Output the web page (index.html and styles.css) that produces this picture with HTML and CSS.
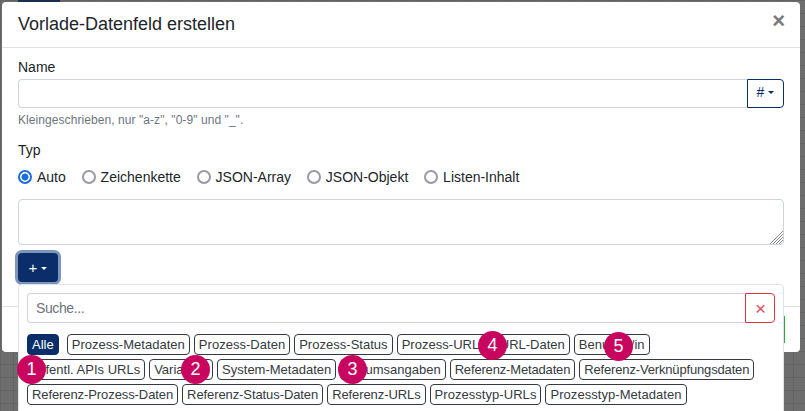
FILE: index.html
```html
<!DOCTYPE html>
<html lang="de">
<head>
<meta charset="utf-8">
<title>Vorlade-Datenfeld erstellen</title>
<link rel="stylesheet" href="styles.css">
</head>
<body>
<div class="backdrop">
  <span class="peek"></span>
  <div class="modal">
    <header class="modal-header">
      <h1 class="modal-title">Vorlade-Datenfeld erstellen</h1>
      <span class="close">×</span>
    </header>
    <div class="modal-body">
      <div class="label">Name</div>
      <div class="input-row">
        <div class="input"></div>
        <div class="hash-btn">#<i class="caret"></i></div>
      </div>
      <div class="help">Kleingeschrieben, nur "a-z", "0-9" und "_".</div>
      <div class="label typ">Typ</div>
      <div class="radios">
        <span class="radio checked"><i class="dot"></i>Auto</span>
        <span class="radio"><i class="dot"></i>Zeichenkette</span>
        <span class="radio"><i class="dot"></i>JSON-Array</span>
        <span class="radio"><i class="dot"></i>JSON-Objekt</span>
        <span class="radio"><i class="dot"></i>Listen-Inhalt</span>
      </div>
      <div class="textarea">
        <svg class="grip" width="14" height="14" viewBox="0 0 14 14"><path d="M1 14 14 1M4 14 14 4M7 14 14 7M10 14 14 10" stroke="#8a8a8a" stroke-width="1" fill="none"/></svg>
      </div>
      <div class="plus-btn">+<i class="caret"></i></div>
    </div>
    <footer class="modal-footer"><span class="ok"></span></footer>
    <div class="dropdown">
      <div class="search-row">
        <div class="search">Suche...</div>
        <div class="clear">×</div>
      </div>
      <div class="chips">
        <span class="chip active">Alle</span>
        <span class="chip wide">Prozess-Metadaten</span>
        <span class="chip wide">Prozess-Daten</span>
        <span class="chip wide">Prozess-Status</span>
        <span class="chip wide">Prozess-URLs</span>
        <span class="chip">URL-Daten</span>
        <span class="chip">Benutzer/in</span>
        <span class="chip">Öffentl. APIs URLs</span>
        <span class="chip">Variablen</span>
        <span class="chip">System-Metadaten</span>
        <span class="chip">Datumsangaben</span>
        <span class="chip narrow">Referenz-Metadaten</span>
        <span class="chip narrow">Referenz-Verknüpfungsdaten</span>
        <span class="chip tight">Referenz-Prozess-Daten</span>
        <span class="chip tight">Referenz-Status-Daten</span>
        <span class="chip tight">Referenz-URLs</span>
        <span class="chip loose">Prozesstyp-URLs</span>
        <span class="chip loose">Prozesstyp-Metadaten</span>
      </div>
    </div>
  </div>
  <span class="badge b1">1</span>
  <span class="badge b2">2</span>
  <span class="badge b3">3</span>
  <span class="badge b4">4</span>
  <span class="badge b5">5</span>
</div>
</body>
</html>
```
FILE: styles.css
```css
* { box-sizing: border-box; }
html, body { margin: 0; height: 100%; overflow: hidden; }
body { font-family: "Liberation Sans", Arial, sans-serif; font-size: 14px; color: #212529; }
.backdrop {
  position: relative;
  width: 805px; height: 411px; overflow: hidden;
  padding: 2px 0 0 2px;
  background-color: #6d6d6d;
  background-image: linear-gradient(#646464 1px, transparent 1px), linear-gradient(90deg, #646464 1px, transparent 1px);
  background-size: 13px 13px;
}
.peek { position: absolute; left: 18px; top: 0; width: 42px; height: 2px; background: #1c2f52; }
.modal {
  position: relative;
  width: 798px; height: 350px;
  background: #fff;
  border-radius: 4px;
  display: flex; flex-direction: column;
}
.modal-header {
  height: 46px; flex: none;
  border-bottom: 1px solid #dee2e6;
  padding: 0 16px;
  display: flex; align-items: center; justify-content: space-between;
}
.modal-title { margin: 0; font-size: 18px; font-weight: 400; line-height: 46px; margin-top: -1px; }
.close { font-size: 22px; font-weight: 700; color: #7a7a7a; line-height: 1; margin-top: -8px; margin-right: -1px; }
.modal-body { padding: 9px 16px 0; flex: 1; }
.label { line-height: 20px; height: 20px; }
.input-row { display: flex; margin-top: 2px; height: 29px; }
.input { flex: 1; border: 1px solid #ced4da; border-right: 0; border-radius: 4px 0 0 4px; background: #fff; }
.hash-btn {
  width: 37px; border: 1px solid #0b2e6b; border-radius: 0 4px 4px 0;
  color: #0b2e6b; font-size: 14px;
  display: flex; align-items: center; justify-content: center; padding-bottom: 3px;
}
.caret {
  display: inline-block; margin-left: 4px; margin-top: 1px;
  border-top: 3px solid currentColor; border-left: 3px solid transparent; border-right: 3px solid transparent;
}
.help { font-size: 12px; line-height: 16px; color: #6c757d; margin-top: 4px; letter-spacing: 0.07px; }
.typ { margin-top: 12px; }
.radios { display: flex; gap: 15.8px; margin-top: 7px; height: 20px; align-items: center; }
.radio { display: inline-flex; align-items: center; gap: 5px; line-height: 20px; }
.dot { width: 14px; height: 14px; border-radius: 50%; border: 2px solid #9a98a3; background: #fff; display: inline-block; }
.radio.checked .dot { border-color: #1a6fd8; background: radial-gradient(circle, #1a6fd8 0 3.2px, #fff 3.8px); }
.textarea { position: relative; height: 46px; margin-top: 12px; border: 1px solid #ced4da; border-radius: 4px; }
.grip { position: absolute; right: 0; bottom: 0; }
.plus-btn {
  width: 40px; height: 29px; margin-top: 8px;
  background: #0b2e6b; color: #fff; border-radius: 4px;
  box-shadow: 0 0 0 3px #7c95b8;
  display: flex; align-items: center; justify-content: center; font-size: 15px;
}
.modal-footer { height: 46px; flex: none; border-top: 1px solid #dee2e6; position: relative; }
.ok { position: absolute; right: 15px; top: 9px; width: 4px; height: 27px; background: #28a745; }
.dropdown {
  position: absolute; left: 16px; top: 282px;
  width: 766px; height: 140px;
  background: #fff; border: 1px solid #dfe2e6; border-radius: 4px;
  padding: 8px;
}
.search-row { display: flex; height: 30px; }
.search {
  flex: 1; border: 1px solid #ced4da; border-right: 0; border-radius: 4px 0 0 4px;
  color: #6c757d; padding: 0 8px; line-height: 28px; letter-spacing: -0.4px;
}
.clear {
  width: 30px; border: 1px solid #e0343f; border-radius: 0 4px 4px 0;
  color: #e0505a; display: flex; align-items: center; justify-content: center; font-size: 19px; padding: 2px 0 0 1px;
}
.chips { display: flex; flex-wrap: wrap; gap: 4px 4px; margin-top: 11px; width: 740px; }
.chip {
  height: 21px; line-height: 19px; padding: 0 4px; font-size: 13px;
  border: 1px solid #343a40; border-radius: 4px; background: #fff; color: #343a40; white-space: nowrap;
}
.chip.wide { letter-spacing: 0.025px; }
.chip.narrow { letter-spacing: -0.16px; }
.chip.tight { letter-spacing: -0.09px; }
.chip.loose { letter-spacing: 0.05px; }
.chip.active { background: #0b2e6b; border-color: #0b2e6b; color: #fff; margin-right: 4px; }
.badge {
  position: absolute; width: 29px; height: 29px; border-radius: 50%;
  background: #c9065f; color: #fff; font-size: 18px;
  display: flex; align-items: center; justify-content: center;
}
.b1 { left: 17px; top: 355px; }
.b2 { left: 181px; top: 355px; }
.b3 { left: 338px; top: 355px; }
.b4 { left: 478px; top: 331px; }
.b5 { left: 604px; top: 332px; }
```
